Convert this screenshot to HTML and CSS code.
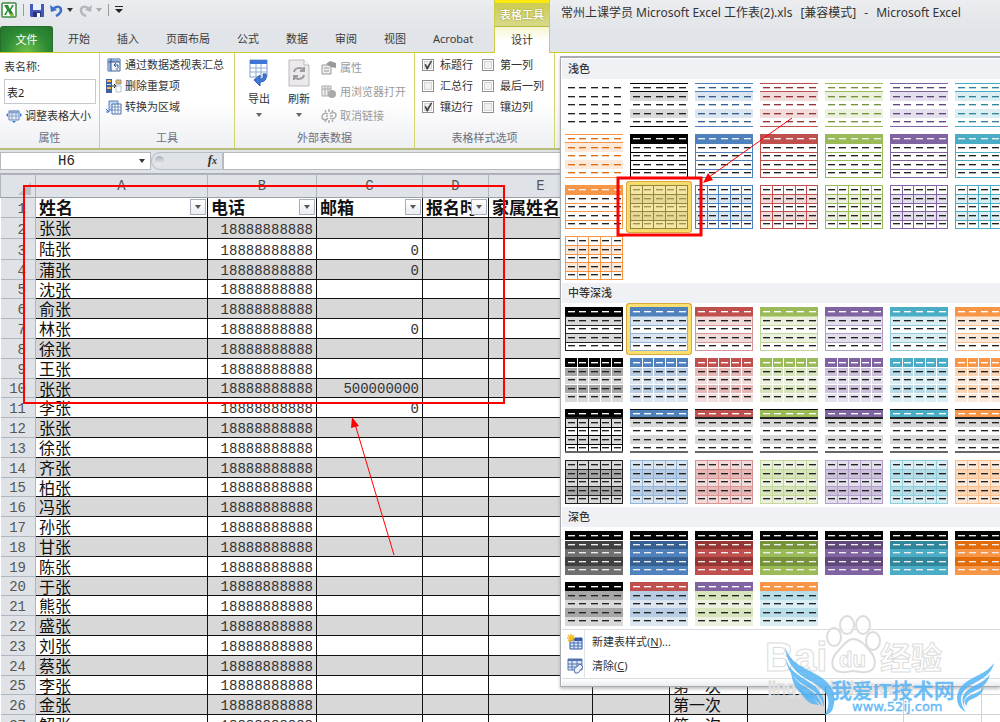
FILE: index.html
```html
<!DOCTYPE html>
<html lang="zh-CN">
<head>
<meta charset="utf-8">
<title>常州上课学员 Microsoft Excel 工作表(2).xls [兼容模式] - Microsoft Excel</title>
<link rel="stylesheet" href="styles.css">
</head>
<body>
<header class="top">
  <div class="main-side">
    <div class="quick">
      <svg class="logo" width="16" height="16" viewBox="0 0 16 16"><rect x="1" y="1" width="14" height="14" rx="1" fill="#fff" stroke="#3c8b40" stroke-width="1.5"/><path d="M3 3h4l2 4 2-4h2l-3 5 3 5H9L7 9l-2 4H3l3-5z" fill="#2e8b35"/><path d="M9 12h4v2H9z" fill="#8cc63f"/></svg>
      <i class="bar"></i>
      <button aria-label="保存"><svg width="14" height="14" viewBox="0 0 14 14"><path d="M0 1h14v13H1L0 13z" fill="#4759b8"/><path d="M3 1h8v6H3z" fill="#eaf0ff"/><path d="M3 9h8v5H3z" fill="#26347f"/><path d="M7 10h3v4H7z" fill="#fff"/></svg></button>
      <button aria-label="撤消"><svg width="13" height="13" viewBox="0 0 13 13"><path d="M3 5c4-4 8-2 8 1s-3 5-5 6" fill="none" stroke="#3d6fc8" stroke-width="2.5"/><path d="M0 1l1 7 6-2z" fill="#3d6fc8"/></svg></button>
      <i class="caret"></i>
      <button aria-label="恢复"><svg width="13" height="13" viewBox="0 0 13 13"><path d="M10 5C6 1 2 3 2 6s2 5 5 6" fill="none" stroke="#b3b6ba" stroke-width="2.5"/><path d="M13 1l-1 7-6-2z" fill="#b3b6ba"/></svg></button>
      <i class="caret pale"></i>
      <i class="bar"></i>
      <button aria-label="自定义快速访问工具栏"><svg width="8" height="8" viewBox="0 0 8 8"><path d="M0 0h8v1H0zM0 3h8L4 7z" fill="#222"/></svg></button>
    </div>
    <nav class="tabs">
      <button class="file">文件</button>
      <button>开始</button><button>插入</button><button>页面布局</button><button>公式</button><button>数据</button><button>审阅</button><button>视图</button><button>Acrobat</button>
    </nav>
  </div>
  <div class="context"><span>表格工具</span><button>设计</button></div>
  <div class="title"><span>常州上课学员 Microsoft Excel 工作表(2).xls</span><span>[兼容模式]</span><span>-</span><span>Microsoft Excel</span></div>
</header>

<section class="ribbon">
  <div class="group g-prop">
    <div class="stack">
      <label for="tname">表名称:</label>
      <input id="tname" type="text" value="表2">
      <button class="cmd"><svg width="16" height="14" viewBox="0 0 16 14"><path d="M3 2h10v9H3z" fill="#e7eef9" stroke="#6884b5"/><path d="M3 2h10v2H3zM6 4v7M10 4v7M3 7h10" fill="#8aa7d8" stroke="#8ba2c8"/><path d="M0 6l2-2v4zM16 6l-2-2v4zM8 14l-2-2h4z" fill="#2a7be0"/></svg>调整表格大小</button>
    </div>
    <h2>属性</h2>
  </div>
  <div class="group g-tool">
    <div class="stack tight">
      <button class="cmd"><svg width="16" height="14" viewBox="0 0 16 14"><path d="M2 1h12v12H2z" fill="#edf3fb" stroke="#41628f"/><path d="M2 1h12v3H2zM2 1h3v12H2z" fill="#91afd8"/><path d="M5 1v12M2 4h12M8 7h4v3M10 5L8 7l2 2M10 11h2" stroke="#35598d" fill="none"/></svg>通过数据透视表汇总</button>
      <button class="cmd"><svg width="16" height="14" viewBox="0 0 16 14"><path d="M0 0h6v14H0z" fill="#3d629e"/><path d="M1 1h4v2H1zM1 8h4v2H1z" fill="#f6b445"/><path d="M1 5h4v1H1z" fill="#cfe0f7"/><path d="M6 7h4M8 5l2 2-2 2" stroke="#222" fill="none"/><path d="M10 1h5v4h-5z" fill="#f6b445" stroke="#8a97ae"/><path d="M10 7h5v6h-5z" fill="#fff" stroke="#b9c2d2"/></svg>删除重复项</button>
      <button class="cmd"><svg width="16" height="15" viewBox="0 0 16 15"><path d="M3 1h9v9H3z" fill="#c6d9f3" stroke="#5a7fb8"/><path d="M6 4h9v10H6z" fill="#fff" stroke="#486ca4"/><path d="M9 4v10M12 4v10M6 7h9M6 10h9" stroke="#6d8ebf"/><path d="M0 9l3 3v-2M3 12H0" stroke="#2c6fd0" fill="none"/></svg>转换为区域</button>
    </div>
    <h2>工具</h2>
  </div>
  <div class="group g-ext">
    <div class="ext">
      <button class="big"><svg width="20" height="28" viewBox="0 0 20 28"><path d="M1 1h17v17H1z" fill="#fff" stroke="#7f9ccc"/><path d="M1 1h17v4H1z" fill="#3f73d4"/><path d="M1 9h17M1 13h17M7 5v13M12 5v13" stroke="#8da9d6"/><path d="M17 15c1 6-2 8-6 8v4l-6-6 6-5v4c3 0 4-1 3-5z" fill="#3d78dc" stroke="#2a59b2"/></svg>导出<i class="caret"></i></button>
      <button class="big"><svg width="22" height="28" viewBox="0 0 22 28"><path d="M1 1h15l5 5v21H1z" fill="#ece9ec" stroke="#bcb8bc"/><path d="M16 1v5h5" fill="#fff" stroke="#bcb8bc"/><path d="M6 13c1-5 8-5 10-1M16 8v4h-4M16 16c-1 5-8 5-10 1M6 21v-4h4" stroke="#9c9a9e" stroke-width="2" fill="none"/></svg>刷新<i class="caret"></i></button>
      <div class="stack off">
        <button class="cmd" disabled><svg width="16" height="14" viewBox="0 0 16 14"><path d="M1 4h9v9H1z" fill="#eee" stroke="#999"/><path d="M3 7h5M3 10h5" stroke="#999"/><path d="M5 3l4-3 6 2v5l-5-1z" fill="#999"/></svg>属性</button>
        <button class="cmd" disabled><svg width="16" height="14" viewBox="0 0 16 14"><path d="M1 1h9v10H1z" fill="#eee" stroke="#aaa"/><path d="M4 1v10M7 1v10M1 4h9" stroke="#aaa"/><circle cx="11" cy="9" r="4" fill="#aaa"/></svg>用浏览器打开</button>
        <button class="cmd" disabled><svg width="16" height="14" viewBox="0 0 16 14"><path d="M7 5c-3-2-6 0-6 3s4 4 6 1M9 9c3 2 6 0 6-3s-4-3-6-1M5 7h2M9 7h3M8 0v3M4 1l1 2M12 1l-1 2M8 11v3M4 13l1-2M12 13l-1-2" stroke="#aaa" stroke-width="1.5" fill="none"/></svg>取消链接</button>
      </div>
    </div>
    <h2>外部表数据</h2>
  </div>
  <div class="group g-opt">
    <div class="checks">
      <label><input type="checkbox" checked>标题行</label><label><input type="checkbox">第一列</label>
      <label><input type="checkbox">汇总行</label><label><input type="checkbox">最后一列</label>
      <label><input type="checkbox" checked>镶边行</label><label><input type="checkbox">镶边列</label>
    </div>
    <h2>表格样式选项</h2>
  </div>
</section>

<div class="formula">
  <input class="namebox" type="text" value="H6" aria-label="名称框">
  <i class="caret"></i>
  <div class="fx"><i class="knob"></i><button aria-label="插入函数"><em>f<small>x</small></em></button></div>
  <input class="expr" type="text" aria-label="编辑栏">
</div>

<main class="sheet">
  <table>
    <colgroup><col class="c-n"><col class="c-a"><col class="c-b"><col class="c-c"><col class="c-d"><col class="c-e"><col class="c-f"><col class="c-g"><col class="c-g"><col class="c-g"><col class="c-g"><col class="c-g"></colgroup>
    <thead><tr><th><i class="corner"></i></th><th>A</th><th>B</th><th>C</th><th>D</th><th>E</th><th></th><th></th><th></th><th></th><th></th><th></th></tr></thead>
    <tbody id="rows"></tbody>
  </table>
</main>

<aside class="gallery">
  <h3>浅色</h3><div class="swatches" id="light"></div>
  <h3>中等深浅</h3><div class="swatches" id="medium"></div>
  <h3>深色</h3><div class="swatches" id="dark"></div>
  <div class="menu">
    <button><span class="ico"><svg width="16" height="16" viewBox="0 0 16 16"><path d="M3 4h12v11H3z" fill="#dce8fa" stroke="#2f55a4"/><path d="M3 4h12v3H3z" fill="#2f55a4"/><path d="M7 4v11M11 4v11M3 9h12M3 12h12" stroke="#4a70ba"/><path d="M4 0v8M0 4h8M1 1l6 6M7 1L1 7" stroke="#f4bf2c" stroke-width="1.5"/></svg></span><span>新建表样式(<u>N</u>)...</span></button>
    <button><span class="ico"><svg width="16" height="16" viewBox="0 0 16 16"><path d="M1 1h14v11H1z" fill="#dce8fa" stroke="#5474ae"/><path d="M1 1h14v2H1z" fill="#5474ae"/><path d="M5 1v11M10 1v11M1 6h14M1 9h14" stroke="#5474ae"/><path d="M7 11l6-5 3 3-5 6H8z" fill="#eef3fb" stroke="#4e6fa9"/></svg></span><span>清除(<u>C</u>)</span></button>
  </div>
  <div class="grip"></div>
</aside>

<svg class="marks" width="1000" height="722" viewBox="0 0 1000 722">
  <g fill="#fff" fill-opacity=".7" stroke="#dcdcdc" stroke-width="2">
    <ellipse cx="834" cy="637" rx="7" ry="9"/><ellipse cx="847" cy="625" rx="7" ry="9"/><ellipse cx="863" cy="625" rx="7" ry="9"/><ellipse cx="873" cy="641" rx="7" ry="9"/>
    <path d="M853 639c-6 0-10 7-15 12-8 8-8 20 3 21 5 1 8-1 12-1s8 2 13 1c11-1 11-13 4-21-5-6-10-12-17-12z"/>
  </g>
  <g class="wm">
    <text x="765" y="671" class="wm-bai">Bai</text><text x="839" y="667" class="wm-du">du</text><text x="880" y="669" class="wm-jy">经验</text>
    <text x="768" y="694" class="wm-url">jingyan.baidu.com</text>
  </g>
  <g fill="#55b4f5" fill-opacity=".85">
    <path d="M785 647c6 18 20 20 34 29 14 8 18 20 14 32-1 4-4 6-8 7 5-10 5-19-3-26-10-10-34-13-37-42z"/>
    <path d="M786 659c4 14 17 18 27 26 8 6 12 14 11 22-5-16-14-18-23-24-8-6-14-13-15-24z"/>
    <path d="M791 672c5 11 14 14 22 20 5 4 8 9 9 15-5-9-14-8-20-13-6-4-10-12-11-22z"/>
    <path d="M799 687c5 8 13 8 20 18l-7-1c-6-3-11-9-13-17z"/>
    <path d="M994 663c-3 14-16 17-26 24-9 7-9 16-2 25-9-4-11-14-7-22 7-13 26-14 35-27z"/>
    <path d="M990 674c-3 13-12 15-21 20-5 4-6 9-4 14-5-8-2-15 4-19 7-5 16-7 21-15z"/>
    <path d="M984 687c-2 9-8 10-14 13-3 2-4 4-3 7-5-6-1-10 4-12 5-2 10-4 13-8z"/>
    <text x="831" y="698" class="wm-it">我爱IT技术网</text><text x="852" y="711" class="wm-52">www.52ij.com</text>
  </g>
  <g fill="none" stroke="#f00" stroke-width="3">
    <rect x="24" y="186" width="480" height="217" stroke-width="2"/>
    <rect x="618" y="178" width="83" height="57"/>
  </g>
  <path d="M394 555L355 424M792 118L709 177" stroke="#f00" stroke-width="1"/>
  <path d="M352 417l7 9-8 2zM703 183l5-10 5 7z" fill="#f00"/>
</svg>
<script src="app.js"></script>
</body>
</html>
```
FILE: styles.css
```css
* { box-sizing: border-box; }
body { margin: 0; height: 100vh; overflow: hidden; display: flex; flex-direction: column; position: relative; background: #fff; color: #333; font: 11px/16px "Noto Sans", "Noto Sans CJK SC", sans-serif; }
button { border: 0; padding: 0; margin: 0; background: none; color: inherit; font: inherit; display: flex; align-items: center; white-space: nowrap; }
input { font: inherit; color: #222; border-radius: 0; }
h2, h3 { margin: 0; font-size: 11px; line-height: 16px; }
.caret { display: block; width: 0; border: 3px solid transparent; border-top: 4px solid #333; border-bottom: 0; }
.caret.pale { border-top-color: #aaa; }

.top { flex: none; display: flex; height: 53px; background: linear-gradient(#ebedf0, #e1e4e8 60%, #e1e5e8); }
.main-side { flex: none; width: 494px; display: flex; flex-direction: column; border-bottom: 1px solid #c9ca2b; }
.quick { height: 26px; display: flex; align-items: center; gap: 6px; padding: 0 1px 6px; }
.quick .bar { width: 1px; height: 12px; background: #999; }
.quick .caret { margin-left: -2px; }
.tabs { display: flex; height: 26px; }
.tabs button { padding: 0 13px 0 14px; }
.tabs .file { width: 53px; justify-content: center; padding: 0; margin-right: 1px; color: #fff; border-radius: 3px 3px 0 0; border: 1px solid #276d2b; border-bottom: 0; background: radial-gradient(ellipse at 50% 100%, #6cc04a, #2c8a35 60%, #24752c); }
.tabs button:not(.file) { color: #3c3c3c; }
.context { flex: none; width: 56px; border: 1px solid #cdce4b; border-width: 0 1px; background: #fff; }
.context span { display: flex; align-items: center; justify-content: center; height: 27px; border-top: 3px solid #fde90f; border-bottom: 1px solid #b8b93a; background: linear-gradient(#cccd50, #d8d98a); color: #fff; text-shadow: 0 0 2px #888a30; font-weight: 500; }
.context button { width: 100%; height: 26px; justify-content: center; background: linear-gradient(#f6f6cf, #fff 50%); }
.title { flex: 1; min-width: 0; display: flex; gap: 8px; padding: 5px 0 0 11px; font-size: 12px; white-space: pre; border-bottom: 1px solid #c9ca2b; }

.ribbon { flex: none; display: flex; height: 97px; background: linear-gradient(#fff 50%, #eeeff3); border-bottom: 2px solid #b9bb78; }
.group { flex: none; display: flex; flex-direction: column; justify-content: space-between; padding: 2px 4px; border-right: 1px solid #d4d56c; }
.group h2 { font-weight: 400; text-align: center; color: #6b7180; }
.g-prop { width: 100px; } .g-tool { width: 135px; } .g-ext { width: 180px; } .g-opt { width: 140px; }
.stack { display: flex; flex-direction: column; align-items: flex-start; gap: 4px; padding-top: 4px; }
.stack input { width: 92px; height: 25px; border: 1px solid #c6c9cf; padding: 0 2px; background: #fff; }
.cmd { gap: 3px; height: 16px; margin-left: 2px; }
.tight { gap: 5px; padding-top: 2px; }
.off { gap: 8px; padding-top: 5px; }
.off .cmd { color: #9a9a9a; }
.ext { display: flex; }
.big { flex-direction: column; width: 40px; padding-top: 4px; }
.big svg { margin-bottom: 4px; }
.big .caret { margin-top: 6px; border-top-color: #666; }
.checks { display: grid; grid-template-columns: 60px 1fr; row-gap: 5px; padding: 2px 0 0 3px; }
.checks label { display: flex; align-items: center; gap: 6px; height: 16px; white-space: nowrap; }
.checks input { appearance: none; flex: none; margin: 0; width: 12px; height: 12px; border: 1px solid #8e8f8f; background: #f1f1f1; box-shadow: inset 0 0 0 1px #fff, inset 0 0 0 2px #d4d4d6; }
.checks input:checked::before { content: ""; display: block; width: 10px; height: 10px; background: #444; clip-path: polygon(15% 45%, 30% 40%, 42% 65%, 80% 5%, 92% 10%, 48% 95%, 36% 95%); }

.formula { flex: none; display: flex; align-items: center; height: 24px; padding: 2px 0 4px; background: #dfe3e8; border-bottom: 1px solid #a9adb5; }
.formula input { border: 1px solid #b5b9bf; background: #fff; height: 18px; }
.formula .namebox { width: 151px; text-align: center; padding: 0 18px 0 0; font: 14px "Liberation Mono", monospace; }
.formula > .caret { margin: 0 6px 0 -12px; }
.fx { width: 72px; height: 18px; display: flex; align-items: center; justify-content: space-between; padding: 0 5px 0 3px; border: 1px solid #b9bdc4; border-radius: 9px 0 0 9px; }
.knob { width: 9px; height: 9px; border-radius: 50%; background: linear-gradient(#aeb1b6, #eef0f2); }
.fx em { font: italic bold 13px/16px "Liberation Serif", serif; }
.fx small { font-size: 10px; }
.formula .expr { flex: 1; min-width: 0; }

.sheet { flex: 1; min-height: 0; overflow: hidden; }
table { border-collapse: collapse; table-layout: fixed; width: 1060px; }
.c-n { width: 35px; } .c-a { width: 172px; } .c-b { width: 109px; } .c-c { width: 106px; } .c-d { width: 66px; } .c-e { width: 104px; } .c-f { width: 77px; } .c-g { width: 78px; }
th, td { padding: 0; height: 20px; line-height: 16px; white-space: nowrap; font-weight: 400; }
tr:nth-child(5n) > * { height: 19px; }
tr:nth-child(2) > *, tr:nth-child(3) > * { height: 21px; }
thead th { height: 23px; background: #dfe3e8; border: 1px solid #b1b6be; border-bottom-color: #9aa0a8; color: #555; font: 14px/18px "Liberation Mono", monospace; }
.corner { display: block; margin: 5px 4px 0 auto; width: 13px; height: 13px; background: #bcc1c9; clip-path: polygon(100% 0, 100% 100%, 0 100%); }
tbody th { background: #dfe3e8; border: 1px solid #b1b6be; border-left: 0; color: #555; text-align: right; vertical-align: bottom; padding: 0 9px 0 0; font: 14px/16px "Liberation Mono", monospace; }
.c { border: 1px solid #111; color: #111; vertical-align: top; font: 400 16px/18px "Noto Sans CJK SC", sans-serif; padding-left: 3px; }
.even .c { background: #d8d8d8; }
.c.num { text-align: right; vertical-align: bottom; color: #333; padding: 0 3px 0 0; font: 14px/16px "Liberation Mono", monospace; }
.blank { border: 1px solid #d0d3d8; }
.head .c { font-weight: 700; font-size: 17px; }
.cell { display: flex; align-items: center; justify-content: space-between; height: 18px; }
.cell span { flex: 1; min-width: 0; }
.cell button { flex: none; width: 16px; height: 16px; justify-content: center; margin-right: 1px; border: 1px solid #a9afb8; background: linear-gradient(#fff, #e9ecf1); }
.cell .caret { border-top-color: #555; }

.gallery { position: absolute; left: 560px; right: 0; top: 56px; overflow: hidden; border: 1px solid #a8abb2; border-right: 0; border-top-width: 2px; padding: 1px 0 0 1px; background: #fff; box-shadow: 0 2px 3px #8888; }
.gallery h3 { height: 20px; line-height: 20px; padding-left: 6px; background: #eff1f5; color: #333; font-weight: 500; }
.swatches { display: grid; grid-template-columns: repeat(7, 58px); gap: 7px; padding: 4px 0 3px 3px; }
.swatches button { width: 58px; height: 44px; position: relative; }
.swatches .chosen { box-shadow: 0 0 0 3px #fddf70, 0 0 0 4px #d5a93c; border-radius: 1px; }
.swatches .hover::after { content: ""; position: absolute; inset: -2px; background: #efd66a; opacity: .62; }
.menu { border-top: 1px solid #d8dbe0; border-bottom: 1px solid #d8dbe0; }
.menu button { width: 100%; height: 24px; gap: 7px; }
.ico { width: 23px; height: 24px; padding: 4px 0 0 4px; border-right: 1px solid #e1e3e7; }
.grip { height: 7px; background: linear-gradient(#fff, #e9ebf0); }

.marks { position: absolute; left: 0; top: 0; pointer-events: none; }
.wm text { fill: #fff; fill-opacity: .7; stroke: #dcdcdc; stroke-width: 1px; font-family: "Liberation Sans", "Noto Sans CJK SC", sans-serif; font-weight: 700; }
.wm .wm-bai { font-size: 40px; } .wm .wm-du { font-size: 22px; } .wm .wm-jy { font-size: 31px; } .wm .wm-url { font-size: 18px; font-weight: 400; }
.wm-it { font: 700 21px "Liberation Sans", "Noto Sans CJK SC", sans-serif; }
.wm-52 { font: 400 13px "DejaVu Sans", sans-serif; stroke: #55b4f5; stroke-width: .4px; }
```
FILE: app.js
```js
const names = '张张 陆张 蒲张 沈张 俞张 林张 徐张 王张 张张 李张 张张 徐张 齐张 柏张 冯张 孙张 甘张 陈张 于张 熊张 盛张 刘张 蔡张 李张 金张 解张'.split(' ');
const mail = { 3: '0', 4: '0', 7: '0', 10: '500000000', 11: '0' };
const heads = ['姓名', '电话', '邮箱', '报名时'];
const blanks = '<td class="blank"></td>'.repeat(3);
let html = '<tr class="head"><th>1</th>' +
  heads.map(h => `<td class="c"><div class="cell"><span>${h}</span><button aria-label="筛选"><i class="caret"></i></button></div></td>`).join('') +
  '<td class="c">家属姓名</td><td class="c"></td><td class="c"></td><td class="c"></td>' + blanks + '</tr>';
names.forEach((n, i) => {
  const r = i + 2;
  const note = r >= 25 ? '第一次' : '';
  html += `<tr class="${r % 2 ? '' : 'even'}"><th>${r}</th><td class="c">${n}</td><td class="c num">18888888888</td>` +
    `<td class="c num">${mail[r] || ''}</td><td class="c"></td><td class="c"></td><td class="c"></td><td class="c">${note}</td><td class="c"></td>${blanks}</tr>`;
});
document.getElementById('rows').innerHTML = html;

// base, dark, mid, light, line
const P = {
  black: ['#000', '#404040', '#a6a6a6', '#d9d9d9', '#222'],
  blue: ['#4f81bd', '#366092', '#b8cce4', '#dce6f1', '#95b3d7'],
  red: ['#c0504d', '#963634', '#e6b8b7', '#f2dcdb', '#da9694'],
  green: ['#9bbb59', '#76933c', '#d8e4bc', '#ebf1de', '#c4d79b'],
  purple: ['#8064a2', '#60497a', '#ccc0da', '#e4dfec', '#b1a0c7'],
  teal: ['#4bacc6', '#31869b', '#b7dee8', '#daeef3', '#92cddc'],
  orange: ['#f79646', '#e26b0a', '#fcd5b4', '#fde9d9', '#fabf8f']
};
const all = Object.keys(P);
const Y = [0, 9, 18, 26, 35, 44];
const X = [0, 12, 23, 35, 46, 58];

function swatch(kind, name, headName) {
  const [base, dark, mid, light, line] = P[name];
  const head = headName ? P[headName][0] : base;
  let s = '';
  const row = (i, f) => { s += `<rect x="0" y="${Y[i]}" width="58" height="${Y[i + 1] - Y[i]}" fill="${f}"/>`; };
  const h = (y, c, w = 1) => { s += `<rect x="0" y="${Math.min(y, 44 - w)}" width="58" height="${w}" fill="${c}"/>`; };
  const v = (x, c) => { s += `<rect x="${Math.min(x, 57)}" y="0" width="1" height="44" fill="${c}"/>`; };
  let ink = ['#222', '#222', '#222', '#222', '#222'];
  if (kind === 'lines') {
    row(1, light); row(3, light); h(0, base); h(8, base); h(43, base);
    ink = Array(5).fill(name === 'black' ? '#222' : dark);
  } else if (kind === 'ruled') {
    row(0, base); Y.forEach(y => h(y, base)); v(0, base); v(57, base); ink[0] = '#eee';
  } else if (kind === 'grid') {
    row(1, light); row(3, light); Y.forEach(y => h(y, base)); X.forEach(x => v(x, base));
  } else if (kind === 'm1') {
    row(1, light); row(3, light); Y.forEach(y => h(y, line)); v(0, line); v(57, line); row(0, base); ink[0] = '#fff';
  } else if (kind === 'm2') {
    [base, mid, light, mid, light].forEach((f, i) => row(i, f));
    Y.slice(1, 5).forEach(y => h(y, '#fff')); X.slice(1, 5).forEach(x => v(x, '#fff')); ink[0] = '#fff';
  } else if (kind === 'm3') {
    row(1, '#d9d9d9'); row(3, '#d9d9d9');
    if (name === 'black') { X.forEach(x => v(x, '#000')); Y.forEach(y => h(y, '#000')); }
    row(0, base); h(0, '#000'); h(8, '#222', 2); h(42, '#666', 2); ink[0] = '#fff';
  } else if (kind === 'm4') {
    [light, mid, light, mid, light].forEach((f, i) => row(i, f));
    Y.forEach(y => h(y, line)); X.forEach(x => v(x, line));
  } else if (kind === 'd1') {
    const b = name === 'black' ? '#707070' : base;
    ['#000', dark, b, dark, b].forEach((f, i) => row(i, f)); h(9, '#fff'); ink = Array(5).fill('#eee');
  } else if (kind === 'd2') {
    [head, mid, light, mid, light].forEach((f, i) => row(i, f)); ink[0] = '#fff';
  }
  for (let r = 0; r < 5; r++)
    for (let c = 0; c < 5; c++) {
      const x = [3, 14, 26, 37, 49][c], y = [4, 13, 21, 30, 38][r];
      s += `<rect x="${x}" y="${y}" width="7" height="1" fill="${ink[r]}"/><rect x="${x}" y="${y + 1}" width="7" height="1" fill="${ink[r]}" opacity=".35"/>`;
    }
  return `<svg width="58" height="44" viewBox="0 0 58 44">${s}</svg>`;
}

function fill(id, items, chosen, cls) {
  document.getElementById(id).innerHTML = items.map((a, i) =>
    `<button aria-label="表样式 ${i + 1}"${i === chosen ? ` class="${cls}"` : ''}>${swatch(...a)}</button>`).join('');
}
fill('light', [['plain', 'black'], ...all.map(n => ['lines', n]), ...all.map(n => ['ruled', n]), ...all.map(n => ['grid', n])], 15, 'chosen hover');
fill('medium', ['m1', 'm2', 'm3', 'm4'].flatMap(k => all.map(n => [k, n])), 1, 'chosen');
fill('dark', [...all.map(n => ['d1', n]), ['d2', 'black'], ['d2', 'blue', 'red'], ['d2', 'green', 'purple'], ['d2', 'teal', 'orange']]);
```
